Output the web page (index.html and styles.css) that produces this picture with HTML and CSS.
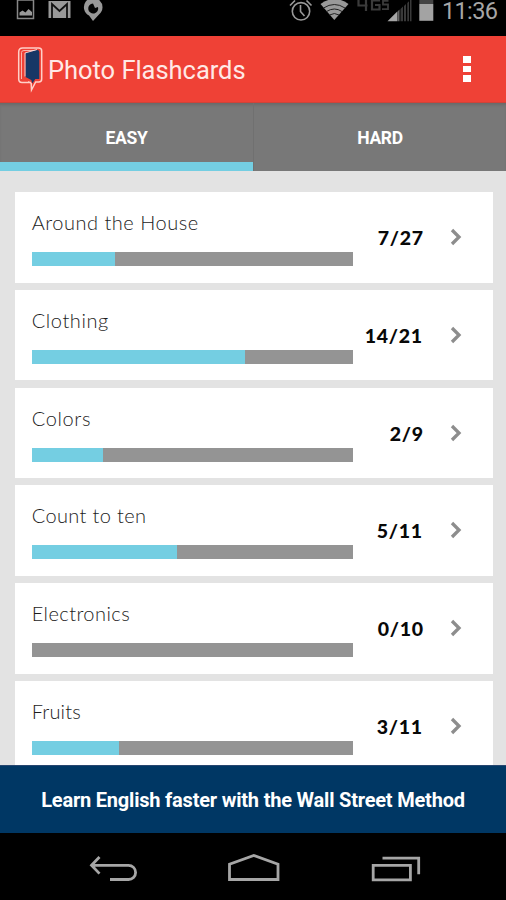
FILE: index.html
```html
<!DOCTYPE html>
<html lang="en">
<head>
<meta charset="utf-8">
<title>Photo Flashcards</title>
<link rel="stylesheet" href="styles.css">
</head>
<body>
<div class="screen">
  <div class="status">
    <svg class="status-left" width="110" height="24" viewBox="0 0 110 24">
      <path d="M17.500 0h16v18.500h-16z" fill="none" stroke="#888" stroke-width="1.500"/>
      <path d="M19.500 15.500v-3l3-2 3 2 3-3.500 3.500 3v3.500z" fill="#999"/>
      <path d="M48.500 1h22v17h-22z" fill="#999"/>
      <path d="M52 18V4l7.500 7L67 4v14" fill="none" stroke="#111" stroke-width="1.800"/>
      <path d="M93 21l-4-5.500A9.300 9.300 0 1 1 99 14.500z" fill="#999"/>
      <path d="M93 3.500a5 5 0 1 0 5 3.500l-3 1z" fill="#050505"/>
    </svg>
    <svg class="status-right" width="148" height="24" viewBox="288 0 148 24">
      <g fill="none" stroke="#999" stroke-width="1.600">
        <circle cx="301" cy="11.300" r="8.700"/>
        <path d="M300.500 5v6.500l4 4.500M290 5.500l5-5M306.500.5l5 5"/>
      </g>
      <path d="M320.500 4q14-10 28 0L334.300 20z" fill="#999"/>
      <path d="M323.500 8q11-7 21.500 0M326.500 11.500q8-5 15.500 0M329.500 15q5-3 9.500 0" fill="none" stroke="#222" stroke-width="1"/>
      <g fill="none" stroke="#3b3b3b" stroke-width="2.200">
        <path d="M358.500-1v6.500h9M366-2v13M380 .5h-8v9h7.500V5H375"/>
        <path d="M388.500.8H383v3.700h5v4.700h-6" stroke-width="1.800"/>
      </g>
      <path d="M387.500 21.300l10-10v10z" fill="#a5a5a5"/>
      <path d="M398 11l1.500-1.500v11.800H398z" fill="#666"/>
      <path d="M400.500 9l2.500-2.500v14.800h-2.500zM404 6l2-2v17.300h-2zM407.300 3l1.700-1.700v20h-1.700zM410 0h1.500v21.300H410z" fill="#393939"/>
      <path d="M419.300 4h14v16.800h-14z" fill="#a3a3a3"/>
      <path d="M419.300 0h14v4h-14z" fill="#444"/>
    </svg>
    <span class="clock">11:36</span>
  </div>
  <header class="appbar">
    <svg class="logo" width="28" height="48" viewBox="16 45 28 48">
      <path d="M31 82.500H22q-3.300 0-3.300-3.500V52q0-4 4-4h16q3 0 3 3v28q0 3-3 3h-3L31.500 90l-.3-6.500-3-2" fill="none" stroke="#ffd0c8" stroke-width="1.500"/>
      <path d="M21.500 79V52.500q0-2 2.500-2h12" fill="none" stroke="#fbb4ac" stroke-width="1"/>
      <path d="M25.500 53l11-3q2.800-.5 2.800 2v27h-4l-3 4.500-1-3.500-5.800-3z" fill="#173766"/>
      <path d="M25 76.500V53l12-3.500" fill="none" stroke="#fff0ed" stroke-width=".8"/>
    </svg>
    <h1 class="title">Photo Flashcards</h1>
    <div class="menu"><i></i><i></i><i></i></div>
  </header>
  <nav class="tabs">
    <div class="tab active">EASY</div>
    <div class="tab">HARD</div>
  </nav>
  <main class="list">
    <section class="card">
      <div class="topic"><div class="name n1">Around the House</div><div class="bar"><div class="fill" style="width:26%"></div></div></div>
      <div class="score">7/27</div><svg class="chev" width="13" height="18" viewBox="0 0 13 18"><path d="M2 2l7 7-7 7"/></svg>
    </section>
    <section class="card">
      <div class="topic"><div class="name n2">Clothing</div><div class="bar"><div class="fill" style="width:66.6%"></div></div></div>
      <div class="score end1">14/21</div><svg class="chev" width="13" height="18" viewBox="0 0 13 18"><path d="M2 2l7 7-7 7"/></svg>
    </section>
    <section class="card">
      <div class="topic"><div class="name n3">Colors</div><div class="bar"><div class="fill" style="width:22.1%"></div></div></div>
      <div class="score">2/9</div><svg class="chev" width="13" height="18" viewBox="0 0 13 18"><path d="M2 2l7 7-7 7"/></svg>
    </section>
    <section class="card">
      <div class="topic"><div class="name n4">Count to ten</div><div class="bar"><div class="fill" style="width:45.4%"></div></div></div>
      <div class="score end1">5/11</div><svg class="chev" width="13" height="18" viewBox="0 0 13 18"><path d="M2 2l7 7-7 7"/></svg>
    </section>
    <section class="card">
      <div class="topic"><div class="name n5">Electronics</div><div class="bar"></div></div>
      <div class="score">0/10</div><svg class="chev" width="13" height="18" viewBox="0 0 13 18"><path d="M2 2l7 7-7 7"/></svg>
    </section>
    <section class="card">
      <div class="topic"><div class="name n6">Fruits</div><div class="bar"><div class="fill" style="width:27.2%"></div></div></div>
      <div class="score end1">3/11</div><svg class="chev" width="13" height="18" viewBox="0 0 13 18"><path d="M2 2l7 7-7 7"/></svg>
    </section>
  </main>
  <div class="banner"><span>Learn English faster with the Wall Street Method</span></div>
  <div class="navbar">
    <svg width="506" height="67" viewBox="0 833 506 67" fill="none" stroke="#a6a6a6" stroke-width="2.800">
      <path d="M99.500 857l-8 8.300 8 8.300M92 865.300h36.500a7 7 0 0 1 0 14.200H110"/>
      <path d="M229.500 879.500v-15.200l24.300-8.800 24.200 8.800v15.200z"/>
      <path d="M373.200 865.300h37.200v14.500h-37.200zM382.500 858.200h36.200v16"/>
    </svg>
  </div>
</div>
</body>
</html>
```
FILE: styles.css
```css
* { box-sizing: border-box; }
body { margin: 0; background: #000; font-family: Roboto, sans-serif; }
.screen { width: 506px; height: 900px; overflow: hidden; display: flex; flex-direction: column; }
.status { height: 36px; flex: none; background: #000; display: flex; align-items: flex-start; }
.status svg { display: block; }
.status-right { margin-left: 178px; }
.clock { margin-left: 6px; color: #a6a6a6; font-size: 23.5px; line-height: 23px; letter-spacing: -.65px; white-space: nowrap; }
.appbar { height: 67px; flex: none; background: #ef4136; border-bottom: 1px solid #cf4339; display: flex; align-items: center; padding: 0 34px 0 16px; }
.logo { flex: none; }
.title { margin: 2px 0 0 4px; color: #ffe9e6; font-size: 25.5px; font-weight: 400; line-height: 32px; letter-spacing: -.04px; white-space: nowrap; }
.menu { margin-left: auto; display: grid; gap: 3px; width: 10px; padding: 0 1px; }
.menu i { height: 6.500px; width: 8px; background: #fff; }
.tabs { height: 68px; flex: none; display: grid; grid-template-columns: 253px 253px; background: #787878; box-shadow: inset 0 3px 3px -1px #6a6a6a; }
.tab { display: flex; align-items: center; justify-content: center; color: #fff; font-weight: 700; font-size: 17.500px; letter-spacing: -.3px; padding-top: 1px; }
.tab + .tab { border-left: 1px solid #707070; }
.tab.active { border-bottom: 9px solid #74cee2; padding-top: 10px; }
.list { flex: 1; min-height: 0; overflow: hidden; background: #e3e3e3; padding: 21px 13px 0 14.700px; display: flex; flex-direction: column; gap: 7.300px; }
.card { height: 90.500px; flex: none; background: #fff; display: flex; padding-left: 17px; }
.topic { width: 321px; flex: none; }
.name { height: 60px; padding-top: 18px; font-family: Lato, sans-serif; font-weight: 300; font-size: 20px; line-height: 25px; color: #1c1c1c; white-space: nowrap; }
.n1 { letter-spacing: .52px; }
.n2 { letter-spacing: .6px; }
.n3 { letter-spacing: .65px; }
.n4 { letter-spacing: .37px; }
.n5 { letter-spacing: .43px; }
.n6 { letter-spacing: .15px; }
.bar { height: 14px; background: #949494; }
.fill { height: 100%; background: #74cee2; }
.score { width: 71px; padding-top: 33px; text-align: right; font-family: Lato, sans-serif; font-weight: 900; font-size: 19.500px; line-height: 25px; letter-spacing: .7px; color: #080808; }
.end1 { padding-right: 1px; }
.chev { margin: 36px 0 0 26px; fill: none; stroke: #8d8d8d; stroke-width: 3.300; }
.banner { height: 68px; flex: none; background: #003764; border-top: 1px solid #27466f; color: #fff; display: flex; align-items: center; justify-content: center; font-size: 20px; font-weight: 700; letter-spacing: -.2px; white-space: nowrap; padding-top: 1px; }
.navbar { height: 67px; flex: none; background: #000; }
.navbar svg { display: block; }
```
